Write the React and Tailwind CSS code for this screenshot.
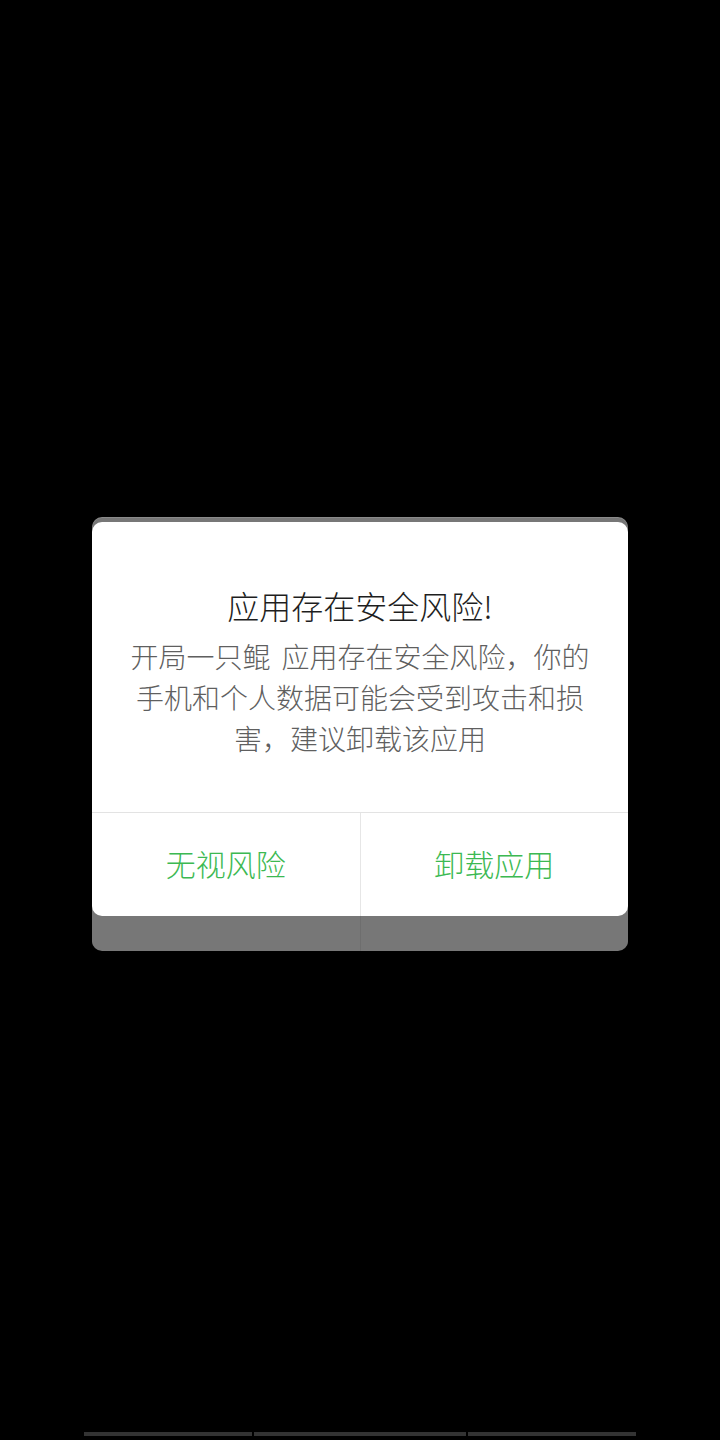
import React from 'react';

const font = { fontFamily: '"Noto Sans CJK SC", "Noto Sans", sans-serif' };

const RiskDialog = () => (
  <div className="ml-[92px] w-[536px] rounded-[10px] bg-[#777777] pt-[4px] shadow-[0_-1px_0_#8a8a8a]">
    <div className="rounded-[10px] bg-white">
      <div className="px-[37px] pt-[61px] pb-[53px] text-center font-light">
        <h2 className="text-[32px] leading-[44px] text-[#1e1e1e]">应用存在安全风险!</h2>
        <p className="mt-[9px] text-[28px] leading-[41px] text-[#5f5f5f] [word-spacing:5px]">
          开局一只鲲 应用存在安全风险，你的手机和个人数据可能会受到攻击和损害，建议卸载该应用
        </p>
      </div>
      <div className="flex border-t border-[#e3e3e3]">
        <button className="flex h-[103px] flex-1 items-center justify-center border-r border-[#e6e6e6] pb-[2px] text-[30px] font-light text-[#3cb952]">
          无视风险
        </button>
        <button className="flex h-[103px] flex-1 items-center justify-center pb-[2px] text-[30px] font-light text-[#3cb952]">
          卸载应用
        </button>
      </div>
    </div>
    <div className="flex h-[35px]">
      <div className="flex-1 border-r border-[#6e6e6e]" />
      <div className="flex-1" />
    </div>
  </div>
);

export default function App() {
  return (
    <div className="relative h-[1440px] w-[720px] bg-black" style={font}>
      <div className="pt-[518px]">
        <RiskDialog />
      </div>
      <div className="absolute left-[84px] top-[1432px] flex gap-[2px]">
        <div className="h-[4px] w-[168px] bg-[#333333]" />
        <div className="h-[4px] w-[212px] bg-[#333333]" />
        <div className="h-[4px] w-[168px] bg-[#333333]" />
      </div>
    </div>
  );
}
